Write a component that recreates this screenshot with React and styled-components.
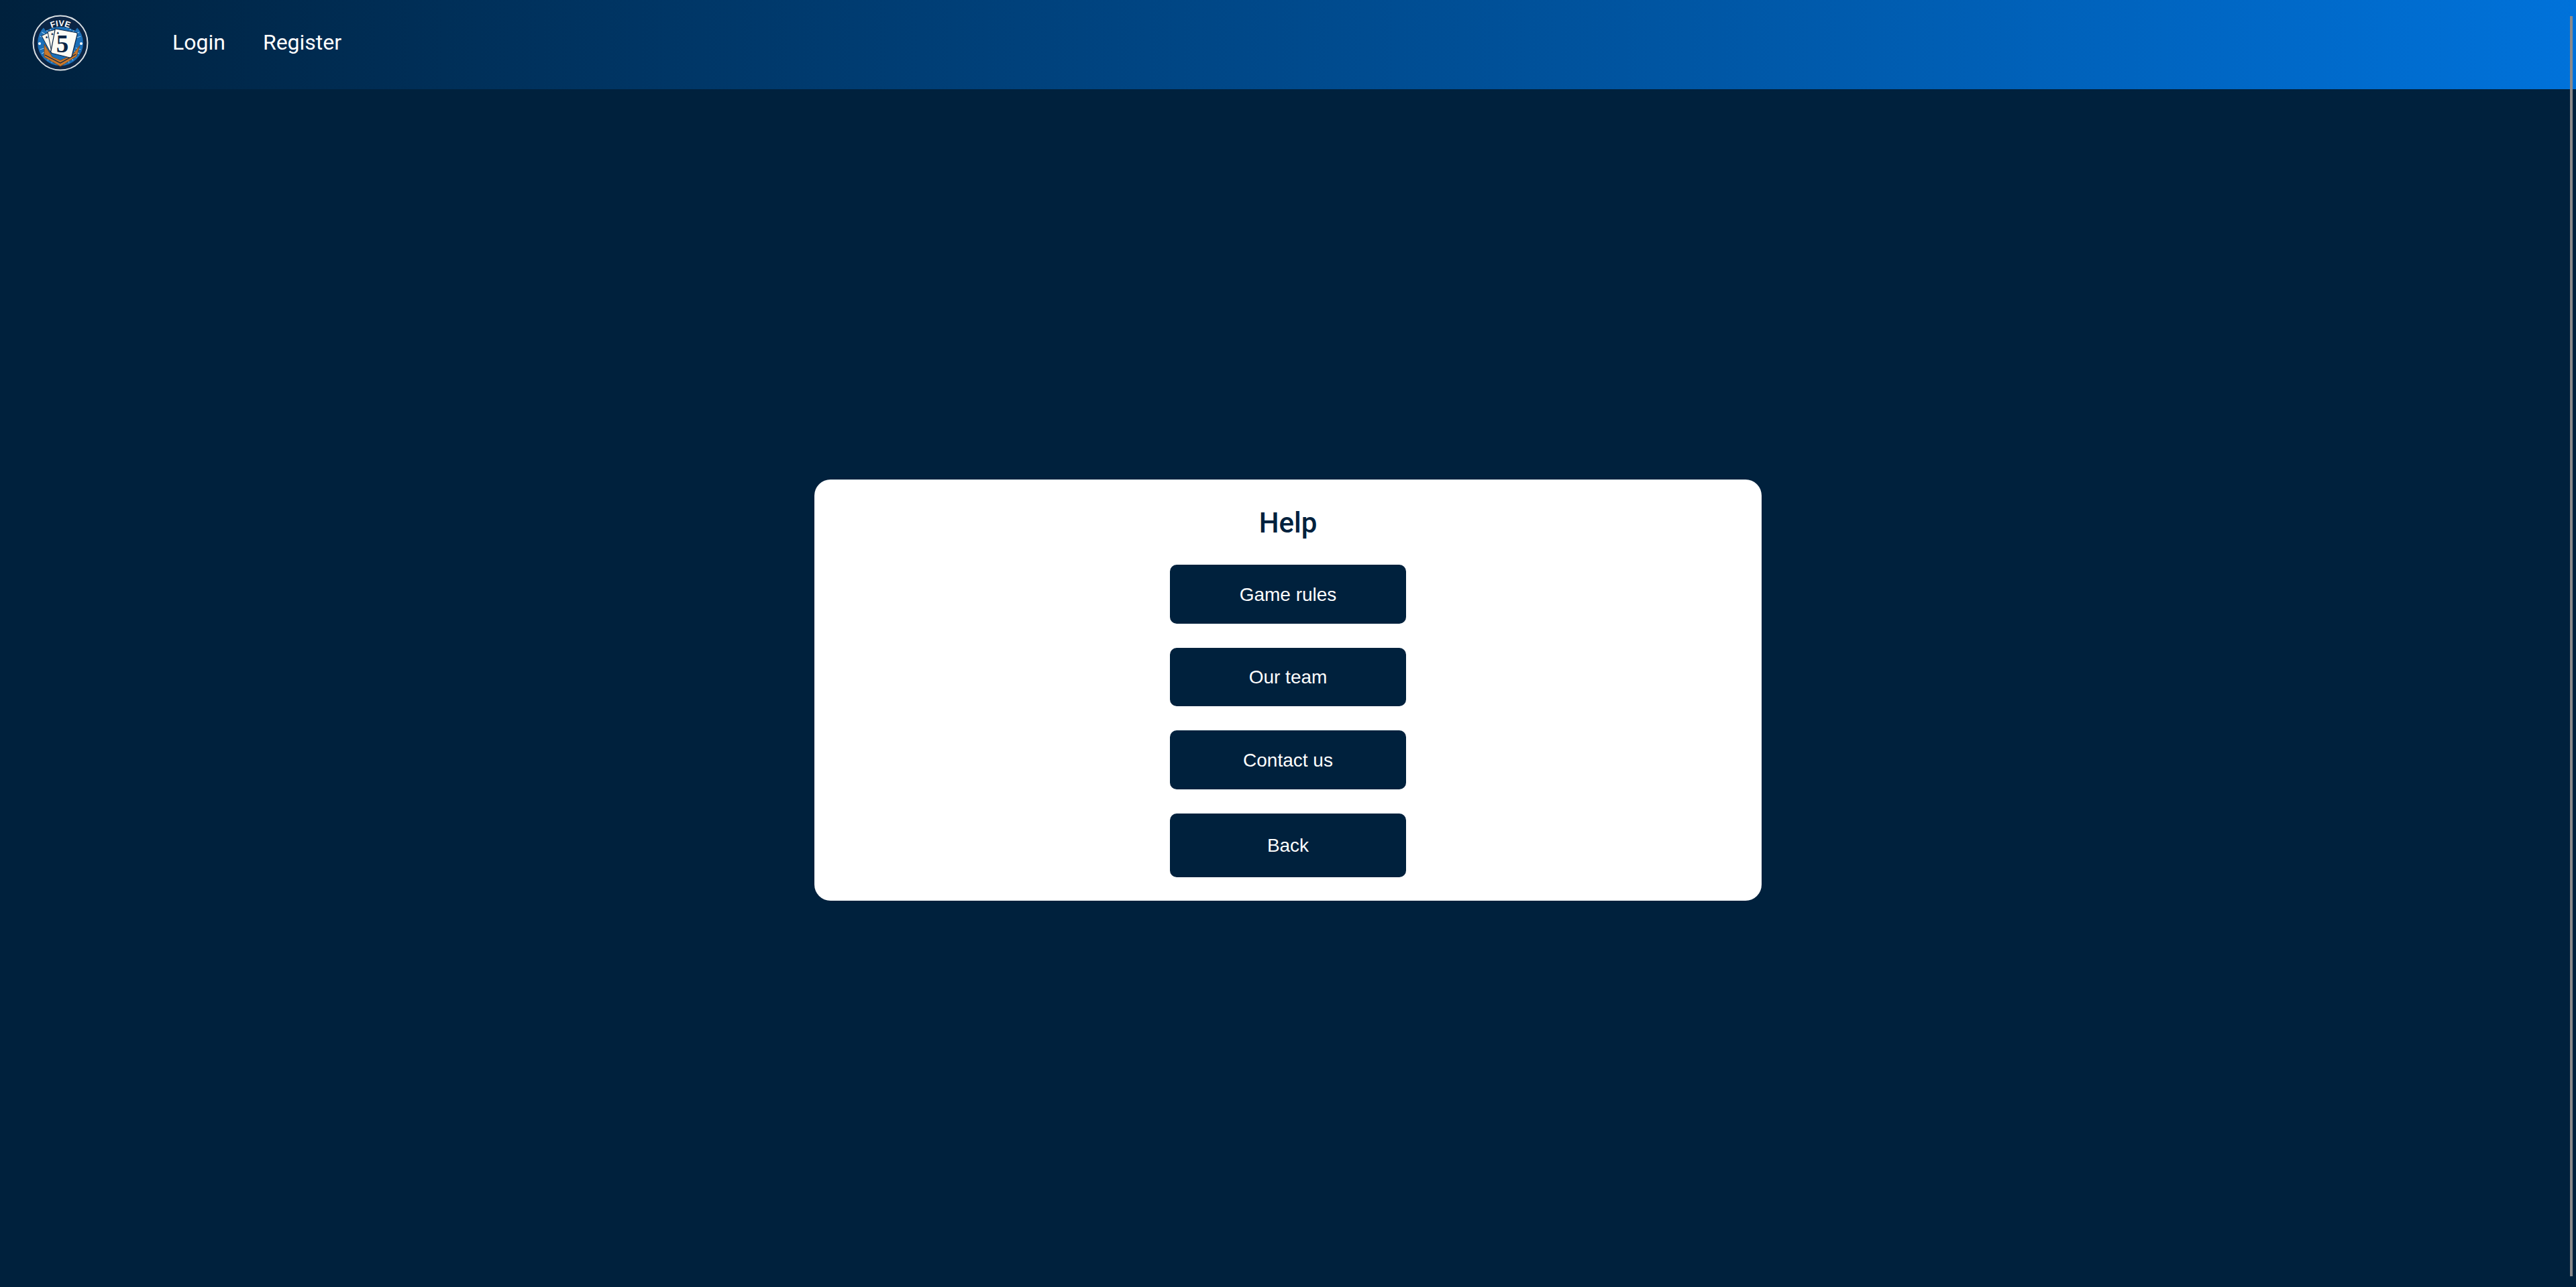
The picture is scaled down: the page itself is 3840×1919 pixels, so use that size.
import React from "react";
import styled, { createGlobalStyle } from "styled-components";

const Global = createGlobalStyle`
  html, body { margin: 0; padding: 0; background: #00213d; }
  body { font-family: Roboto, "Liberation Sans", sans-serif; overflow: hidden; }
`;
const Page = styled.div`
  position: relative;
  height: 1919px;
  display: flex;
  flex-direction: column;
  background: #00213d;
`;
const TopBar = styled.header`
  height: 133px;
  flex: none;
  display: flex;
  align-items: center;
  padding: 0 0 6px 48px;
  box-sizing: border-box;
  background: linear-gradient(90deg, #00213d 0%, #0072da 100%);
`;
const Logo = styled.svg`
  width: 84px;
  height: 84px;
  flex: none;
  margin-right: 125px;
`;
const NavList = styled.nav`
  display: flex;
  gap: 56px;
  margin-top: -1px;
`;
const NavLink = styled.a`
  font: 400 32px/40px Roboto, sans-serif;
  color: #fff;
`;
const Main = styled.main`
  flex: 1;
  display: flex;
  justify-content: center;
  padding-top: 582px;
`;
const Card = styled.section`
  width: 1412px;
  height: 628px;
  box-sizing: border-box;
  background: #fff;
  border-radius: 24px;
  display: flex;
  flex-direction: column;
  align-items: center;
  padding-top: 39px;
`;
const Title = styled.h1`
  margin: 0 0 36px;
  font: 500 42px/52px Roboto, sans-serif;
  color: #00213d;
`;
const ButtonStack = styled.div`
  display: flex;
  flex-direction: column;
  gap: 36px;
`;
const ActionButton = styled.button`
  width: 352px;
  height: ${(p) => (p.$tall ? "95px" : "87.67px")};
  padding: 2px 0 0;
  border: 0;
  border-radius: 10px;
  background: #00213d;
  color: #fff;
  font: 400 28px "Liberation Sans", Arial, sans-serif;
`;
const ScrollThumb = styled.div`
  position: absolute;
  top: 24px;
  bottom: 16px;
  right: 5px;
  width: 4px;
  background: #8a8a8a;
`;

const rayAngles = [-78, -66, -54, -42, -30, -18, 18, 30, 42, 54, 66, 78];

const LogoMark = () => (
  <Logo viewBox="0 0 84 84">
    <defs>
      <path id="fiveArc" d="M20 25 Q42 9 64 25" />
    </defs>
    <circle cx="42" cy="42" r="40.5" fill="#0b2545" stroke="#d9dfe3" strokeWidth="2" />
    <circle cx="42" cy="42" r="34" fill="#1b6fb8" />
    {rayAngles.map((a) => (
      <g key={a}>
        <line x1="66" y1="42" x2="74" y2="42" stroke="#a9d3ee" strokeWidth="1" transform={`rotate(${a} 42 42)`} />
        <line x1="66" y1="42" x2="74" y2="42" stroke="#a9d3ee" strokeWidth="1" transform={`rotate(${180 - a} 42 42)`} />
      </g>
    ))}
    <circle cx="11" cy="43" r="2" fill="#fff" />
    <circle cx="73" cy="43" r="2" fill="#fff" />
    <path d="M42 3 A39 39 0 0 1 70 15 L64 24 Q42 12 20 24 L14 15 A39 39 0 0 1 42 3 Z" fill="#0b2545" />
    <path d="M18 44 L30 63 L42 68 L60 60 L71 46 L66 62 L42 77 L18 63 Z" fill="#c9782c" stroke="#7a4518" strokeWidth="0.8" />
    <path d="M19 60 L42 72 L65 59" fill="none" stroke="#0b2545" strokeWidth="1.4" />
    <path d="M14 31.5 L25 26 L37 56 L26 54 Z" fill="#f4f4ee" stroke="#0b2545" strokeWidth="1" />
    <path d="M23 25 L35 22 L42 58 L29 56 Z" fill="#f4f4ee" stroke="#0b2545" strokeWidth="1" />
    <path d="M34 22.5 Q32 21 35 21 L65 26.5 Q68 27 67 30 L59 62 Q58 64 56 64 L30 57.5 Q27 56.5 28 54 Z" fill="#fbfbf5" stroke="#0b2545" strokeWidth="1.2" />
    <text x="20" y="36" fontFamily="DejaVu Sans, sans-serif" fontSize="5" fill="#0b2545" transform="rotate(-20 20 36)">♠</text>
    <text x="28" y="31" fontFamily="DejaVu Sans, sans-serif" fontSize="5" fill="#0b2545" transform="rotate(-10 28 31)">♠</text>
    <text x="36" y="29" fontFamily="DejaVu Sans, sans-serif" fontSize="5" fill="#0b2545">♠</text>
    <text x="45" y="56" textAnchor="middle" fontFamily="Liberation Serif, serif" fontWeight="700" fontSize="37" fill="#0b2545">5</text>
    <text fontFamily="Liberation Sans, sans-serif" fontWeight="700" fontSize="12.5" fill="#fff" textAnchor="middle">
      <textPath href="#fiveArc" startOffset="50%">FIVE</textPath>
    </text>
  </Logo>
);

export default function App() {
  return (
    <Page>
      <Global />
      <TopBar>
        <LogoMark />
        <NavList>
          <NavLink>Login</NavLink>
          <NavLink>Register</NavLink>
        </NavList>
      </TopBar>
      <Main>
        <Card>
          <Title>Help</Title>
          <ButtonStack>
            <ActionButton>Game rules</ActionButton>
            <ActionButton>Our team</ActionButton>
            <ActionButton>Contact us</ActionButton>
            <ActionButton $tall>Back</ActionButton>
          </ButtonStack>
        </Card>
      </Main>
      <ScrollThumb />
    </Page>
  );
}
